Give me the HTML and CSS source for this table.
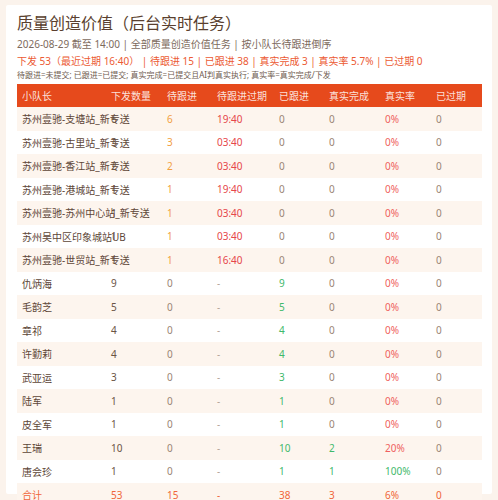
FILE: index.html
```html
<!DOCTYPE html>
<html lang="zh-CN">
<head>
    <meta charset="UTF-8">
    <meta name="viewport" content="width=device-width, initial-scale=1.0">
    <title>质量创造价值（后台实时任务）</title>
    <link rel="stylesheet" href="styles.css">
</head>
<body>
    <div class="card">
        <h1 class="title">质量创造价值（后台实时任务）</h1>
        <p class="meta">2026-08-29 截至 14:00 | 全部质量创造价值任务 | 按小队长待跟进倒序</p>
        <p class="summary">下发 53（最近过期 16:40） | 待跟进 15 | 已跟进 38 | 真实完成 3 | 真实率 5.7% | 已过期 0</p>
        <p class="legend">待跟进=未提交; 已跟进=已提交; 真实完成=已提交且AI判真实执行; 真实率=真实完成/下发</p>

        <table class="report">
            <colgroup>
                <col style="width: 89px">
                <col style="width: 56px">
                <col style="width: 50px">
                <col style="width: 62px">
                <col style="width: 50px">
                <col style="width: 56px">
                <col style="width: 51px">
                <col style="width: 51px">
            </colgroup>
            <thead>
                <tr>
                    <th>小队长</th>
                    <th>下发数量</th>
                    <th>待跟进</th>
                    <th>待跟进过期</th>
                    <th>已跟进</th>
                    <th>真实完成</th>
                    <th>真实率</th>
                    <th>已过期</th>
                </tr>
            </thead>
            <tbody>
                <tr><td class="name">苏州壹驰-支塘站_新专送</td><td>6</td><td class="pending">6</td><td class="late">19:40</td><td class="zero">0</td><td class="zero">0</td><td class="bad">0%</td><td class="zero">0</td></tr>
                <tr><td class="name">苏州壹驰-古里站_新专送</td><td>3</td><td class="pending">3</td><td class="late">03:40</td><td class="zero">0</td><td class="zero">0</td><td class="bad">0%</td><td class="zero">0</td></tr>
                <tr><td class="name">苏州壹驰-香江站_新专送</td><td>2</td><td class="pending">2</td><td class="late">03:40</td><td class="zero">0</td><td class="zero">0</td><td class="bad">0%</td><td class="zero">0</td></tr>
                <tr><td class="name">苏州壹驰-港城站_新专送</td><td>1</td><td class="pending">1</td><td class="late">19:40</td><td class="zero">0</td><td class="zero">0</td><td class="bad">0%</td><td class="zero">0</td></tr>
                <tr><td class="name">苏州壹驰-苏州中心站_新专送</td><td>1</td><td class="pending">1</td><td class="late">03:40</td><td class="zero">0</td><td class="zero">0</td><td class="bad">0%</td><td class="zero">0</td></tr>
                <tr><td class="name">苏州吴中区印象城站UB</td><td>1</td><td class="pending">1</td><td class="late">03:40</td><td class="zero">0</td><td class="zero">0</td><td class="bad">0%</td><td class="zero">0</td></tr>
                <tr><td class="name">苏州壹驰-世贸站_新专送</td><td>1</td><td class="pending">1</td><td class="late">16:40</td><td class="zero">0</td><td class="zero">0</td><td class="bad">0%</td><td class="zero">0</td></tr>
                <tr><td class="name">仇炳海</td><td>9</td><td class="zero">0</td><td class="dash">-</td><td class="good">9</td><td class="zero">0</td><td class="bad">0%</td><td class="zero">0</td></tr>
                <tr><td class="name">毛韵芝</td><td>5</td><td class="zero">0</td><td class="dash">-</td><td class="good">5</td><td class="zero">0</td><td class="bad">0%</td><td class="zero">0</td></tr>
                <tr><td class="name">章祁</td><td>4</td><td class="zero">0</td><td class="dash">-</td><td class="good">4</td><td class="zero">0</td><td class="bad">0%</td><td class="zero">0</td></tr>
                <tr><td class="name">许勤莉</td><td>4</td><td class="zero">0</td><td class="dash">-</td><td class="good">4</td><td class="zero">0</td><td class="bad">0%</td><td class="zero">0</td></tr>
                <tr><td class="name">武亚运</td><td>3</td><td class="zero">0</td><td class="dash">-</td><td class="good">3</td><td class="zero">0</td><td class="bad">0%</td><td class="zero">0</td></tr>
                <tr><td class="name">陆军</td><td>1</td><td class="zero">0</td><td class="dash">-</td><td class="good">1</td><td class="zero">0</td><td class="bad">0%</td><td class="zero">0</td></tr>
                <tr><td class="name">皮全军</td><td>1</td><td class="zero">0</td><td class="dash">-</td><td class="good">1</td><td class="zero">0</td><td class="bad">0%</td><td class="zero">0</td></tr>
                <tr><td class="name">王瑞</td><td>10</td><td class="zero">0</td><td class="dash">-</td><td class="good">10</td><td class="good">2</td><td class="bad">20%</td><td class="zero">0</td></tr>
                <tr><td class="name">唐会珍</td><td>1</td><td class="zero">0</td><td class="dash">-</td><td class="good">1</td><td class="good">1</td><td class="good">100%</td><td class="zero">0</td></tr>
                <tr class="total"><td>合计</td><td>53</td><td>15</td><td>-</td><td>38</td><td>3</td><td>6%</td><td>0</td></tr>
            </tbody>
        </table>
    </div>
</body>
</html>
```

FILE: styles.css
```css
html, body {
    height: 500px;
    overflow: hidden;
}

body {
    margin: 0;
    padding: 5px 6px 0;
    box-sizing: border-box;
    background: #fbf3ec;
    font-family: "Noto Sans", "Noto Sans CJK SC", sans-serif;
    color: #5d4637;
}

.card {
    height: 489px;
    box-sizing: border-box;
    padding: 8px 10px 0 11px;
    background: #fff;
    border-radius: 2px;
}

.title {
    margin: 0;
    font-size: 16px;
    line-height: 20px;
    font-weight: 400;
    color: #5a3f2e;
}

.meta {
    margin: 4px 0 0;
    font-size: 10px;
    line-height: 14px;
    color: #7d6a5d;
}

.summary {
    margin: 3px 0 0;
    font-size: 10px;
    line-height: 14px;
    color: #ec5a33;
}

.legend {
    margin: 1px 0 0;
    font-size: 8px;
    line-height: 12px;
    color: #6e5b4f;
}

.report {
    margin-top: 3px;
    width: 465px;
    table-layout: fixed;
    border-collapse: collapse;
    font-size: 10px;
}

.report th {
    height: 23px;
    padding: 0 0 0 5px;
    background: #e64a1c;
    color: rgba(255, 255, 255, 0.85);
    font-weight: 400;
    text-align: left;
}

.report td {
    height: 23.5px;
    padding: 0 0 0 5px;
    white-space: nowrap;
    overflow: visible;
    color: #6b5445;
}

.report tbody tr:nth-child(odd) {
    background: #fdf5ee;
}

.report .name { color: #5d4637; }
.report .zero { color: #9a8576; }
.report .pending { color: #f2a03f; }
.report .late { color: #e6474b; }
.report .dash { color: #b3a397; }
.report .good { color: #3fb96b; }
.report .bad { color: #ef5f60; }

.report tr.total {
    background: #fde9d8;
}

.report tr.total td {
    color: #f0663a;
}
```
